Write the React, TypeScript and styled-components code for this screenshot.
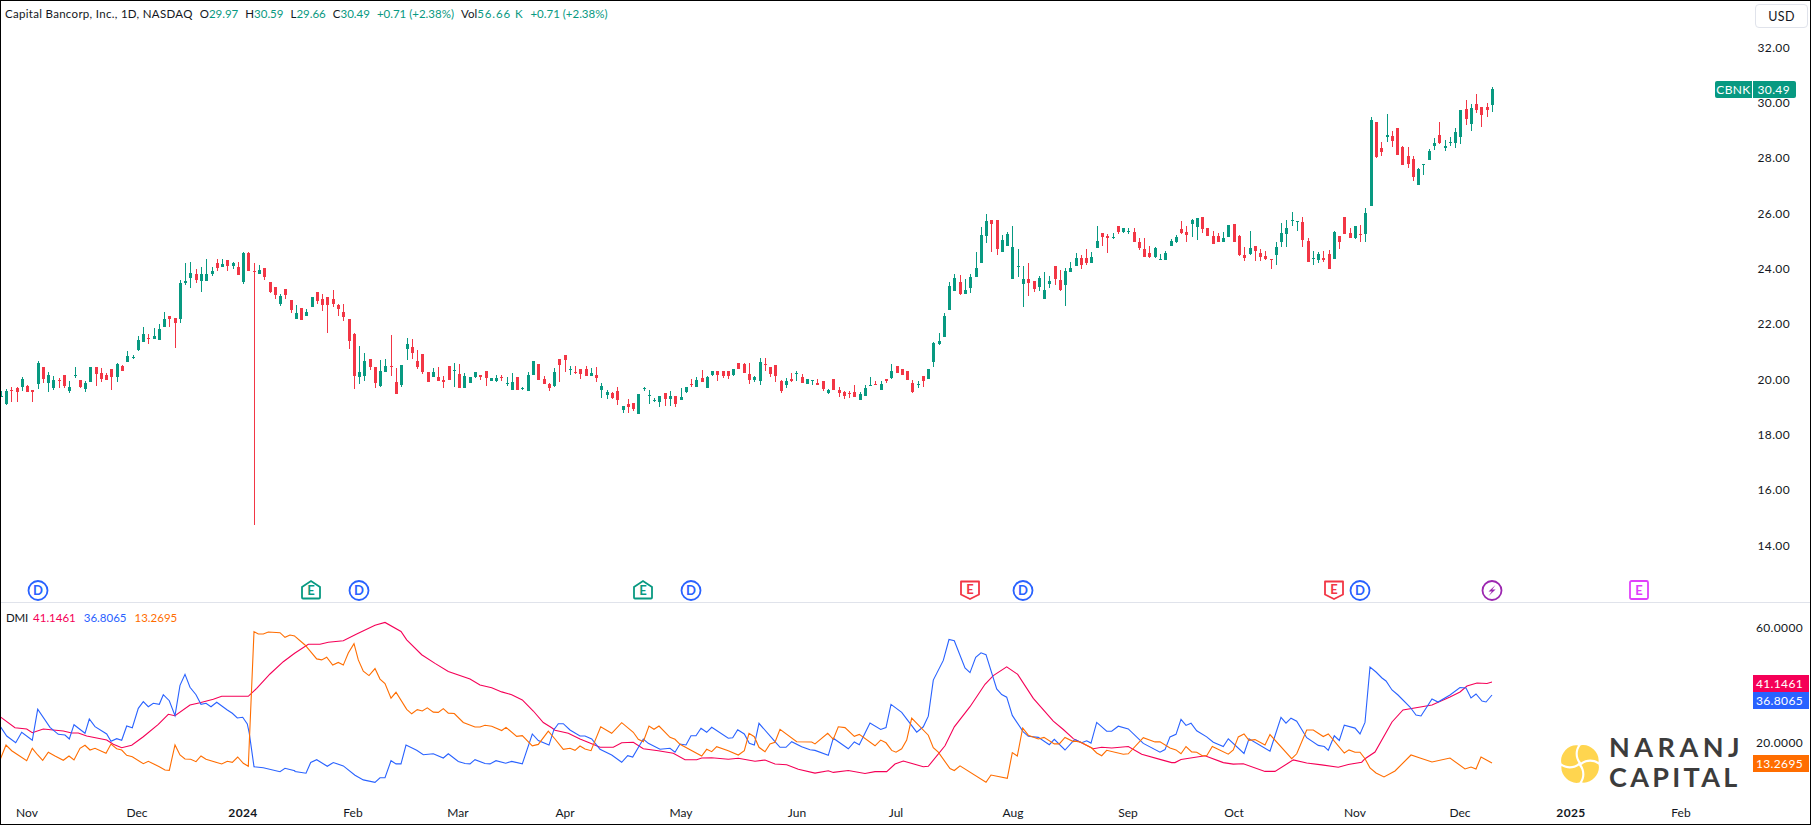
import React from "react";
import styled, { createGlobalStyle } from "styled-components";

const UP = "#089981";
const DOWN = "#F23645";
const BLUE = "#2962FF";
const PINK = "#F50057";
const ORANGE = "#FF6D00";
const INK = "#131722";
const FONT = `"Lato", "Open Sans", sans-serif`;

const GlobalStyle = createGlobalStyle`
  html, body { margin: 0; padding: 0; background: #fff; }
  body { font-family: ${FONT}; color: ${INK}; }
`;

const Frame = styled.div`
  width: 1811px;
  height: 825px;
  box-sizing: border-box;
  border: 1px solid #000;
  border-left-width: 1.5px;
  display: flex;
  flex-direction: column;
  background: #fff;
  overflow: hidden;
`;
const PaneRow = styled.div<{ $h: number }>`
  display: flex;
  height: ${(p) => p.$h}px;
  flex: none;
`;
const Plot = styled.div`
  position: relative;
  flex: 1;
  min-width: 0;
  svg { display: block; }
`;
const Axis = styled.div`
  position: relative;
  width: 57px;
  flex: none;
`;
const Separator = styled.div`
  height: 1px;
  flex: none;
  background: #e0e3eb;
`;
const TimeAxis = styled.div`
  position: relative;
  flex: 1;
`;
const TimeTick = styled.span<{ $strong?: boolean }>`
  position: absolute;
  top: 8px;
  transform: translateX(-50%);
  font-size: 12px;
  line-height: 16px;
  font-weight: ${(p) => (p.$strong ? 700 : 400)};
  letter-spacing: ${(p) => (p.$strong ? "0.4px" : "0")};
`;
const PriceTick = styled.span<{ $wide?: boolean }>`
  position: absolute;
  right: ${(p) => (p.$wide ? 7 : 20)}px;
  transform: translateY(-50%);
  font-size: 12px;
  line-height: 16px;
  letter-spacing: 0.35px;
`;
const Legend = styled.div`
  position: absolute;
  left: 4px;
  top: 4px;
  display: flex;
  align-items: center;
  height: 16px;
  font-size: 11.5px;
  white-space: nowrap;
`;
const LegendTitle = styled.span`
  margin-right: 7px;
  letter-spacing: 0.3px;
`;
const LegendItem = styled.span`
  margin-right: 7px;
`;
const Up = styled.span<{ $wide?: boolean }>`
  color: ${UP};
  letter-spacing: ${(p) => (p.$wide ? "0.9px" : "normal")};
`;
const DmiLegend = styled.div`
  position: absolute;
  left: 5px;
  top: 7px;
  display: flex;
  gap: 8px;
  font-size: 11.5px;
  line-height: 16px;
`;
const DmiName = styled.span`
  margin-right: -3px;
  letter-spacing: -0.2px;
`;
const DmiValue = styled.span<{ $c: string }>`
  color: ${(p) => p.$c};
`;
const UsdButton = styled.div`
  position: absolute;
  left: 2px;
  top: 3px;
  width: 53px;
  height: 24px;
  box-sizing: border-box;
  border: 1px solid #e0e3eb;
  border-radius: 4px;
  font-size: 12.5px;
  display: flex;
  align-items: center;
  justify-content: center;
  letter-spacing: 0.4px;
`;
const PriceTag = styled.div`
  position: absolute;
  top: 80px;
  left: -38px;
  display: flex;
  height: 17px;
  color: #fff;
  font-size: 12px;
  line-height: 17px;
  letter-spacing: 0.35px;
`;
const TagName = styled.span`
  width: 37px;
  text-align: center;
  background: ${UP};
  border-radius: 2px 0 0 2px;
  margin-right: 1px;
`;
const TagValue = styled.span`
  width: 43px;
  box-sizing: border-box;
  padding-right: 6px;
  text-align: right;
  background: ${UP};
  border-radius: 0 2px 2px 0;
`;
const ValueBadge = styled.span<{ $c: string }>`
  position: absolute;
  left: 0;
  width: 56px;
  height: 17px;
  box-sizing: border-box;
  padding-right: 6px;
  text-align: right;
  background: ${(p) => p.$c};
  color: #fff;
  font-size: 12px;
  line-height: 17px;
  letter-spacing: 0.35px;
`;
const MarkerBox = styled.svg`
  position: absolute;
  top: 577px;
  width: 24px;
  height: 24px;
  margin-left: -12px;
  overflow: visible;
`;
const MarkerLetter = styled.text`
  font-family: ${FONT};
  font-size: 13px;
  font-weight: 700;
  text-anchor: middle;
`;
const Watermark = styled.div`
  position: absolute;
  left: 1560px;
  top: 129px;
  display: flex;
  align-items: center;
  gap: 10px;
`;
const FlowerSlot = styled.div`
  margin-top: 4px;
  svg { display: block; }
`;
const WordMark = styled.div`
  display: flex;
  flex-direction: column;
  color: #3c3c3c;
  font-family: "Lato", sans-serif;
  font-weight: 700;
  font-size: 27px;
  line-height: 30px;
`;
const WordLine = styled.span<{ $ls: number }>`
  letter-spacing: ${(p) => p.$ls}px;
`;

type Candle = { up: boolean; wt: number; bt: number; bb: number; wb: number };
const seg = (y0: number, k: number, rows: string): Candle[] =>
  rows
    .trim()
    .split(/\s+/)
    .map((r) => {
      const [wt, bt, bb, wb] = r.slice(1).split(",").map(Number);
      const f = (v: number) => Math.round(y0 + v / k);
      return { up: r[0] === "u", wt: f(wt), bt: f(bt), bb: f(bb), wb: f(wb) };
    });

const candles: Candle[] = [
  ...seg(200, 3, `u574,588,590,592 u567,573,612,615 d561,570,573,605 d560,564,576,605 u531,537,561,573 d556,558,576,576 d570,570,576,605
  u483,489,552,567 d501,501,537,549 u516,525,549,576 u528,540,564,570 d534,540,543,564 d525,525,558,564 u543,561,573,579 u501,525,528,534
  d540,540,561,564 u543,549,567,576 u501,501,546,546 d501,501,522,558 d504,519,537,546 d519,525,540,540 d507,507,531,570 u489,492,531,546
  d495,498,513,513 u453,468,486,486 u465,471,474,477 u408,420,450,453 u381,402,426,426 d402,414,417,432 u384,408,417,417 u372,387,420,420
  u336,357,381,381 d348,348,357,381 d354,354,369,444 u240,249,357,369 u189,243,249,255 u186,219,234,264 d207,222,240,249 u201,222,243,276
  u177,222,243,243 u201,213,222,228 d177,189,204,213 u177,192,201,201 d180,180,198,213 u186,189,198,207 d186,201,225,225 u156,159,246,252
  d156,159,213,213 d189,213,216,975 u195,210,222,222 d204,204,231,240 d246,246,276,279 d261,261,285,297 u282,288,312,318 d267,267,285,297
  d300,300,330,339`),
  ...seg(255, 2.877, `u144,168,183,183 d152,152,186,186 u155,164,175,175 u121,121,149,149 d106,106,131,140 d112,127,144,160 d121,121,143,223
  d101,127,140,149 d141,144,155,175 d141,164,177,190 d184,184,248,269 d224,227,347,386 u262,337,350,370 u282,305,347,362 d299,299,322,330
  d322,322,367,383 u302,334,377,380 u299,319,338,338 d230,319,322,347 d325,365,400,400 u316,316,374,380 u239,256,270,302 d242,265,282,298
  d273,305,322,328 d285,285,337,341 d338,338,365,365 u325,338,350,350 d322,350,362,362 d347,360,365,382 d319,319,360,360 u311,331,333,380
  d314,343,383,383 u340,349,383,383 u351,351,367,367 u337,337,351,354 d345,345,350,359 d334,334,354,376 u354,354,362,362 u345,354,362,365
  d345,351,354,362 u351,368,370,377 u339,365,388,388 d351,351,388,388 u380,383,385,388 u337,346,390,390 u305,305,345,345 d314,314,359,359
  d348,358,370,370 d368,372,382,390 u325,337,377,380`),
  ...seg(335, 3, `d72,72,89,141 d60,60,74,110 u93,102,104,120 d93,111,113,117 d102,102,117,132 d94,102,122,123 u100,114,122,122 d96,120,128,140
  u145,153,164,188 u166,171,179,192 d171,174,188,191 d156,168,195,210 u213,213,225,234 d193,207,216,234 d204,204,222,228 u177,177,237,237
  u155,159,162,168 u166,180,182,207 u188,195,197,202 u183,183,201,216 d174,174,192,213 u168,183,192,213 d183,183,207,216 u159,186,195,195
  u156,156,171,174 d132,147,150,156 u127,135,156,156 d105,129,141,141 u123,126,159,159 u108,108,120,123 d108,108,120,138 d108,108,123,129
  d108,108,123,132 u102,102,120,123 d84,84,102,102 d84,87,114,114 d84,117,135,147 u123,126,135,141 u69,81,138,150 d69,87,90,108
  d96,96,117,126 d90,90,123,141 d135,138,168,174 u129,138,150,159 d114,132,138,141 u108,114,117,138 d117,126,144,144 u132,132,147,147
  u135,135,138,150 d132,144,150,150`),
  ...seg(205, 2.635, `d464,464,486,490 u485,488,495,497 d459,459,487,487 d480,488,495,505 d490,493,503,510 d491,495,498,508 d474,493,505,507
  u493,498,513,513 u474,482,502,502 u453,473,477,477 d464,471,473,473 u464,472,487,487 d459,459,465,470 u420,437,456,459 d424,424,442,442
  d432,432,447,447 d437,437,460,460 d460,469,493,495 u465,471,473,483 d451,451,463,480 u432,432,458,458 u362,364,415,426 u337,358,366,368
  u284,293,347,347 u204,213,276,276 u182,192,226,226 d184,203,234,236 u195,224,234,234 u182,190,220,232 u124,166,191,191 u57,79,154,154
  u24,42,83,99 d40,40,49,124 d40,40,116,132 u80,92,125,125 u70,76,107,107 u55,111,194,194 u116,161,163,190 u161,195,207,270 d153,195,205,240
  d200,200,221,229 u188,192,216,226 u177,224,249,249 u187,200,207,220 d161,161,194,212 d171,198,224,227 u166,175,210,266 u150,166,177,177
  u126,140,161,161`),
  ...seg(200, 2.613, `d145,152,169,180 d128,152,165,169 u137,149,165,165 u68,107,125,125 d86,86,97,120 d90,95,98,138 u87,97,100,102 d68,68,84,90
  u73,73,84,87 u73,81,84,90 d72,84,111,111 d100,110,125,130 d99,128,149,149 d119,139,149,151 u124,126,150,152 u141,154,156,158 u133,139,157,157
  u102,107,119,120 u92,96,111,112 d55,77,86,88 d68,84,91,111 u49,52,64,96 u47,47,70,105 d44,44,77,85 d73,73,94,94 d82,95,115,115 d87,94,111,111
  u84,98,109,111 u66,66,97,97 d63,63,109,109 d92,94,145,146 d124,144,152,159 u82,125,141,145 d120,120,132,159 d129,139,149,159 d133,147,154,157
  d154,155,157,179 u110,123,145,171 u60,86,111,122 u52,73,89,124 u31,52,54,68 u55,56,57,81 d44,57,105,122 d98,107,162,162 u132,152,154,170
  u136,141,157,165 d133,152,158,162 d131,141,180,180 u82,84,154,154 d94,94,110,128 d44,44,89,89 d73,85,98,99 u68,68,100,103 d66,89,91,110`),
  ...seg(0, 1, `u208,213,234,242`),
  ...seg(60, 3, `u170,180,438,438 d186,186,291,294 d246,264,276,288 u162,225,231,246 d213,228,243,261 d204,204,285,285 d258,261,315,315
  d261,288,312,324 d288,297,351,363 u324,327,375,375 u312,312,315,345 u267,273,300,300 u234,249,258,270 d186,225,249,252 u240,258,264,273
  u231,246,249,258 u204,216,249,264 u150,150,231,252 d120,147,177,195 u132,144,192,213 d102,132,150,159 d141,141,165,201 d129,141,150,171
  u81,87,135,156`),
];

type Crop = [number, number, number, number, number, string];
const trace = (crops: Crop[], tail: string) => {
  const pts: string[] = [];
  crops.forEach(([xo, yo, ky, from, to, rows]) => {
    rows
      .trim()
      .split(/\s+/)
      .forEach((p) => {
        const [zx, zy] = p.split(",").map(Number);
        const x = xo + zx / 3;
        if (x >= from && x < to) pts.push(`${x.toFixed(1)},${(yo + zy / ky).toFixed(1)}`);
      });
  });
  return [...pts, ...tail.trim().split(/\s+/)].join(" ");
};
const Z = (s: string): Crop => [0, 560, 3, 0, 295, s];
const A = (s: string): Crop => [295, 255, 2.877, 295, 555, s];
const B = (s: string): Crop => [555, 335, 3, 555, 815, s];
const C = (s: string): Crop => [815, 205, 2.635, 815, 1075, s];
const E = (s: string): Crop => [1075, 200, 2.613, 1075, 1366, s];

const adx = trace(
  [
    Z(`0,470 45,503 80,507 97,518 130,507 190,513 215,519 235,519 260,528 320,540 340,553 365,563 395,556 430,530 475,493 505,463 525,467 570,435 600,428 640,418 665,409 745,409 770,385 810,342 850,305 880,283`),
    A(`0,1145 40,1120 75,1120 100,1114 145,1110 185,1090 240,1065 270,1057 318,1083 335,1107 380,1150 420,1175 460,1198 525,1220 555,1237 590,1245 620,1257 650,1265 682,1280 715,1312 745,1345 770,1360 795,1373`),
    B(`0,1186 40,1195 75,1212 110,1226 135,1237 175,1237 200,1223 235,1222 265,1241 310,1247 355,1255 390,1274 425,1274 440,1269 470,1268 520,1273 550,1270 600,1279 630,1275 660,1287 695,1289 730,1303 795,1314`),
    C(`0,1497 40,1491 55,1495 100,1490 150,1498 180,1493 215,1493 240,1473 265,1465 325,1480 340,1479 390,1425 418,1375 465,1322 510,1263 535,1240 575,1217 608,1237 655,1300 715,1360 745,1382 775,1406`),
    E(`0,1410 55,1434 80,1430 110,1432 160,1428 200,1448 260,1463 290,1470 300,1470 318,1462 390,1452 445,1470 475,1474 505,1473 570,1493 600,1493 655,1463 695,1471 740,1476 790,1482 820,1475 860,1469 870,1460`),
  ],
  `1375,752 1392,722 1403,710 1432,705 1450,697 1460,692 1467,686 1477,683 1487,683.5 1492,682`
);
const plusDi = trace(
  [
    Z(`0,498 20,528 47,548 65,517 97,541 113,448 150,502 175,523 195,525 208,537 222,494 255,520 268,477 285,500 320,522 333,544 350,536 365,541 380,498 397,503 415,445 430,425 445,440 460,430 478,433 490,404 508,422 525,467 540,376 555,343 570,382 588,404 603,433 618,430 633,440 650,427 682,450 697,460 712,474 728,472 742,492 748,520 762,620 790,623 840,635 855,625 884,632`),
    A(`0,1486 33,1491 47,1460 65,1452 97,1471 115,1460 145,1470 180,1497 205,1510 240,1517 255,1504 270,1504 288,1455 303,1464 318,1464 333,1410 365,1425 385,1438 415,1435 445,1447 460,1435 490,1457 510,1463 525,1464 540,1452 570,1463 585,1464 603,1455 632,1462 650,1457 682,1464 712,1378 730,1397 762,1410 778,1362 795,1348`),
    B(`0,1180 10,1166 25,1166 45,1185 75,1203 90,1203 110,1212 135,1243 170,1260 200,1282 218,1262 233,1266 265,1212 280,1225 315,1243 345,1240 360,1252 375,1227 393,1230 408,1202 423,1202 438,1180 455,1192 470,1177 520,1210 533,1208 548,1184 568,1197 583,1225 598,1230 612,1165 660,1220 675,1237 693,1237 710,1220 740,1235 765,1244 795,1250`),
    C(`0,1437 40,1450 55,1405 100,1433 118,1415 133,1422 165,1365 197,1382 213,1377 228,1316 260,1337 305,1389 325,1375 340,1347 355,1252 385,1200 402,1145 418,1148 450,1220 465,1232 482,1192 498,1180 513,1185 545,1275 560,1290 575,1297 592,1345 625,1388 640,1400 670,1403 703,1422 718,1408 750,1436 775,1412`),
    E(`0,1410 20,1418 35,1413 48,1419 65,1365 95,1388 110,1388 130,1375 160,1382 205,1420 255,1443 270,1436 285,1403 303,1396 318,1357 333,1373 348,1367 365,1387 395,1403 415,1417 445,1428 460,1408 507,1446 522,1408 585,1440 618,1352 633,1367 648,1354 665,1362 695,1405 730,1425 748,1428 760,1438 778,1400 793,1412 808,1372 840,1380 855,1395 870,1365`),
  ],
  `1370,667 1376,672 1382,678 1386,681 1392,690 1398,695 1410,707 1416,715 1421,716 1432,699 1438,702 1450,695 1460,687.5 1466,688 1471,698 1476,694 1482,701 1486,702 1492,695`
);
const minusDi = trace(
  [
    Z(`0,600 18,555 35,572 80,602 97,565 113,585 128,601 145,577 165,588 190,601 207,588 222,600 240,565 255,556 270,570 285,565 318,580 333,552 350,566 365,570 380,586 397,590 430,611 445,604 478,620 495,630 508,631 525,555 540,585 555,597 572,598 588,605 603,588 618,598 665,612 682,604 697,607 713,591 730,610 745,619 762,215 775,222 790,222 805,216 840,218 855,232 870,225 884,228`),
    A(`0,1097 30,1122 65,1162 80,1165 95,1157 113,1180 130,1172 145,1180 160,1145 177,1118 190,1165 205,1197 222,1210 240,1190 255,1220 270,1233 288,1275 303,1258 335,1307 350,1320 367,1308 382,1312 397,1303 415,1315 430,1316 445,1305 460,1318 478,1319 505,1345 540,1358 555,1358 570,1353 590,1356 620,1368 633,1359 665,1385 682,1383 712,1412 730,1408 760,1370 795,1412`),
    B(`0,1212 25,1243 45,1240 60,1246 75,1233 90,1242 108,1247 137,1175 170,1195 200,1163 235,1192 250,1213 265,1220 282,1173 297,1183 312,1173 345,1207 360,1213 375,1228 440,1263 455,1243 470,1250 485,1235 520,1247 550,1260 568,1247 582,1195 598,1205 612,1237 630,1250 645,1227 660,1222 675,1183 725,1220 770,1221 785,1227 795,1216`),
    C(`0,1420 38,1392 55,1408 70,1375 90,1377 118,1400 133,1395 180,1425 197,1410 213,1417 230,1437 243,1442 260,1433 275,1410 290,1352 340,1397 355,1430 370,1442 405,1485 418,1490 435,1478 513,1521 528,1502 577,1511 592,1443 607,1452 623,1378 640,1397 670,1407 687,1403 718,1420 733,1420 750,1403 775,1414`),
    E(`0,1414 18,1417 50,1432 65,1445 80,1452 95,1438 145,1448 160,1447 205,1405 240,1416 255,1416 285,1432 303,1437 318,1447 333,1428 350,1442 365,1443 382,1452 395,1452 412,1428 460,1448 475,1437 490,1403 507,1395 522,1412 540,1410 570,1424 585,1397 650,1460 665,1447 695,1385 715,1385 745,1402 760,1395 808,1445 822,1437 840,1443 855,1443 870,1460`),
  ],
  `1370,768 1376,773 1384,777 1395,771 1411,755 1420,758 1432,762 1450,758 1465,769 1471,767 1476,769 1481,757 1492,763`
);

const priceTicks = [32, 30, 28, 26, 24, 22, 20, 18, 16, 14];
const timeTicks: [string, number, boolean?][] = [
  ["Nov", 27], ["Dec", 137], ["2024", 243, true], ["Feb", 353], ["Mar", 458], ["Apr", 565],
  ["May", 681], ["Jun", 797], ["Jul", 896], ["Aug", 1013], ["Sep", 1128], ["Oct", 1234],
  ["Nov", 1355], ["Dec", 1460], ["2025", 1571, true], ["Feb", 1681],
];

type Ev = ["D" | "Eu" | "Ed" | "F" | "Es", number];
const events: Ev[] = [
  ["D", 38.7], ["Eu", 311.3], ["D", 359.5], ["Eu", 643.5], ["D", 691.5], ["Ed", 970.3],
  ["D", 1023.3], ["Ed", 1334.3], ["D", 1360.7], ["F", 1492.3], ["Es", 1639.3],
];

const Marker = ({ kind, x }: { kind: Ev[0]; x: number }) => {
  const common = { fill: "#fff", strokeWidth: 1.8 };
  return (
    <MarkerBox viewBox="0 0 24 24" style={{ left: x - 1.5 }}>
      {kind === "D" && <circle cx="12" cy="12.5" r="9.5" {...common} stroke={BLUE} />}
      {kind === "Eu" && <path d="M3 9l9-6 9 6v10.5a1 1 0 0 1-1 1H4a1 1 0 0 1-1-1z" {...common} stroke={UP} />}
      {kind === "Ed" && <path d="M3 3.5h18v13l-9 4.5-9-4.5z" {...common} stroke={DOWN} strokeLinejoin="round" />}
      {kind === "Es" && <rect x="3" y="3" width="18" height="18" rx="1.5" {...common} stroke="#E040FB" />}
      {kind === "F" && (
        <>
          <circle cx="12" cy="12.5" r="9.5" {...common} stroke="#9C27B0" />
          <path d="M15.5 7l-7 6.6h3.4L8.6 18l7-6.4h-3.4z" fill="#9C27B0" />
        </>
      )}
      {kind !== "F" && (
        <MarkerLetter
          x="12"
          y={kind === "Eu" ? 17 : kind === "Ed" ? 15.5 : 17}
          fill={kind === "D" ? BLUE : kind === "Eu" ? UP : kind === "Ed" ? DOWN : "#E040FB"}
        >
          {kind[0]}
        </MarkerLetter>
      )}
    </MarkerBox>
  );
};

const Flower = () => (
  <svg width="38" height="38" viewBox="-19 -19 38 38">
    {[0, 90, 180, 270].map((a) => (
      <path
        key={a}
        transform={`rotate(${a})`}
        d="M1 -1.5C-3 -6 -3.5 -13 0.5 -18.5 C9 -21 20 -12 18.5 -2 C13 -5.5 6 -5 1 -1.5Z"
        fill="#FFD54F"
      />
    ))}
  </svg>
);

export default function App() {
  const yPrice = (p: number) => 46.5 + (32 - p) * 27.68;
  return (
    <>
      <GlobalStyle />
      <Frame>
        <PaneRow $h={601}>
          <Plot>
            <svg width="1752" height="601" viewBox="1 1 1752 601" shapeRendering="crispEdges">
              {candles.map((c, i) => {
                const x = Math.floor(1.3 + 5.269 * i);
                const color = c.up ? UP : DOWN;
                return (
                  <g key={i} fill={color}>
                    <rect x={x} y={c.wt} width={1} height={Math.max(c.wb - c.wt, 1)} />
                    <rect x={x - 1} y={c.bt} width={3} height={Math.max(c.bb - c.bt, 1)} />
                  </g>
                );
              })}
            </svg>
            <Legend>
              <LegendTitle>Capital Bancorp, Inc., 1D, NASDAQ</LegendTitle>
              <LegendItem>O<Up>29.97</Up></LegendItem>
              <LegendItem>H<Up>30.59</Up></LegendItem>
              <LegendItem>L<Up>29.66</Up></LegendItem>
              <LegendItem>C<Up>30.49</Up></LegendItem>
              <LegendItem><Up>+0.71 (+2.38%)</Up></LegendItem>
              <LegendItem>Vol<Up $wide>56.66 K</Up></LegendItem>
              <LegendItem><Up>+0.71 (+2.38%)</Up></LegendItem>
            </Legend>
            {events.map(([k, x], i) => (
              <Marker key={i} kind={k} x={x} />
            ))}
          </Plot>
          <Axis>
            <UsdButton>USD</UsdButton>
            {priceTicks.map((p) => (
              <PriceTick key={p} style={{ top: yPrice(p) }}>{p.toFixed(2)}</PriceTick>
            ))}
            <PriceTag>
              <TagName>CBNK</TagName>
              <TagValue>30.49</TagValue>
            </PriceTag>
          </Axis>
        </PaneRow>
        <Separator />
        <PaneRow $h={194}>
          <Plot>
            <svg width="1752" height="194" viewBox="1 603 1752 194" fill="none">
              <polyline points={adx} stroke={PINK} strokeWidth="1.1" />
              <polyline points={plusDi} stroke={BLUE} strokeWidth="1.1" />
              <polyline points={minusDi} stroke={ORANGE} strokeWidth="1.1" />
            </svg>
            <DmiLegend>
              <DmiName>DMI</DmiName>
              <DmiValue $c={PINK}>41.1461</DmiValue>
              <DmiValue $c={BLUE}>36.8065</DmiValue>
              <DmiValue $c={ORANGE}>13.2695</DmiValue>
            </DmiLegend>
            <Watermark>
              <FlowerSlot>
                <Flower />
              </FlowerSlot>
              <WordMark>
                <WordLine $ls={4.5}>NARANJ</WordLine>
                <WordLine $ls={3.3}>CAPITAL</WordLine>
              </WordMark>
            </Watermark>
          </Plot>
          <Axis>
            <PriceTick $wide style={{ top: 25 }}>60.0000</PriceTick>
            <PriceTick $wide style={{ top: 140 }}>20.0000</PriceTick>
            <ValueBadge $c={PINK} style={{ top: 72 }}>41.1461</ValueBadge>
            <ValueBadge $c={BLUE} style={{ top: 89 }}>36.8065</ValueBadge>
            <ValueBadge $c={ORANGE} style={{ top: 152 }}>13.2695</ValueBadge>
          </Axis>
        </PaneRow>
        <TimeAxis>
          {timeTicks.map(([t, x, s]) => (
            <TimeTick key={t + x} $strong={s} style={{ left: x - 1 }}>{t}</TimeTick>
          ))}
        </TimeAxis>
      </Frame>
    </>
  );
}
